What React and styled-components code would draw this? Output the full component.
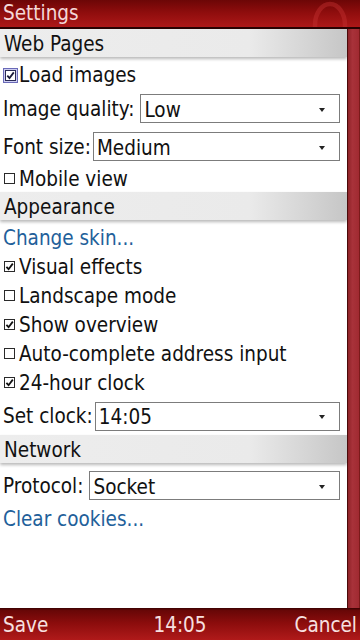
import { createGlobalStyle, styled } from 'styled-components'

const GlobalStyle = createGlobalStyle`
    html, body{
        margin: 0;
        padding: 0;
        background: #ffffff;
    }
    body{
        font-family: "DejaVu Sans Condensed", "DejaVu Sans", sans-serif;
        font-stretch: condensed;
    }
`

const Screen = styled.div`
    width: 360px;
    height: 640px;
    display: flex;
    flex-direction: column;
    overflow: hidden;
    font-size: 20.5px;
    color: #111111;
`

const TitleBar = styled.div`
    height: 27px;
    display: flex;
    justify-content: space-between;
    align-items: flex-start;
    background: linear-gradient(to bottom, #6c0606 0%, #8e0d0d 45%, #ad1818 100%);
    border-bottom: 2px solid #2a0202;
    padding-left: 3px;
    overflow: hidden;

    span{
        line-height: 26px;
        color: #f4d8d8;
    }
    svg{
        margin-right: 12px;
    }
`

const Body = styled.div`
    flex: 1;
    display: flex;
    min-height: 0;
`

const Content = styled.div`
    flex: 1;
    display: flex;
    flex-direction: column;
    background: #ffffff;
`

const Scrollbar = styled.div`
    width: 11px;
    border-left: 1px solid #4a0a0a;
    border-right: 1px solid #7a1a1a;
    background: linear-gradient(to right, #8f2328 0%, #a8323a 40%, #a02a31 100%);
`

const SectionHeader = styled.div`
    height: 28px;
    flex-shrink: 0;
    display: flex;
    align-items: center;
    padding: 2px 0 0 4px;
    box-sizing: border-box;
    margin-bottom: 3.5px;
    background: linear-gradient(to right, #ededed 0%, #eaeaea 72%, #c6c6c6 100%);
    box-shadow: 0 2px 3px rgba(0, 0, 0, 0.28);
`

const Row = styled.div`
    height: ${props => props.$h || 29}px;
    flex-shrink: 0;
    display: flex;
    align-items: center;
    padding-left: 3px;
    line-height: 20px;
    color: ${props => props.$link ? '#22609a' : '#111111'};
`

const CheckBox = styled.span`
    width: 15px;
    height: 20px;
    display: flex;
    align-items: center;
    margin-right: 1px;

    svg{
        display: block;
    }
`

const SelectRow = styled.div`
    height: 38px;
    flex-shrink: 0;
    display: flex;
    align-items: center;
    padding: 0 7px 0 3px;

    label{
        line-height: 20px;
        margin-right: ${props => props.$gap}px;
        white-space: nowrap;
    }
`

const SelectBox = styled.div`
    flex: 1;
    height: 29px;
    display: flex;
    align-items: center;
    justify-content: space-between;
    border: 1px solid #7c7c7c;
    box-sizing: border-box;
    padding: 2px 14px 0 3px;
    background: #ffffff;

    span{
        line-height: 20px;
    }
`

const Arrow = styled.i`
    width: 0;
    height: 0;
    border-left: 3px solid transparent;
    border-right: 3px solid transparent;
    border-top: 4px solid #222222;
`

const SoftBar = styled.div`
    height: 32px;
    display: grid;
    grid-template-columns: 1fr auto 1fr;
    align-items: center;
    padding: 0 3px;
    background: linear-gradient(to bottom, #3a0202 0%, #680707 8%, #8a0c0c 45%, #b01a1a 100%);
    color: #f7e0e0;

    span{
        line-height: 20px;
        padding-top: 2px;
    }
    span:last-child{
        justify-self: end;
    }
`

function Check({ checked, focused }){
    if(focused){
        return(
            <CheckBox>
                <svg width="15" height="15" viewBox="0 0 15 15">
                    <rect x="0.5" y="0.5" width="14" height="14" fill="#cdcdf0" stroke="#6a6ab8" />
                    <rect x="2.5" y="2.5" width="10" height="10" fill="#ffffff" stroke="#2a2a55" />
                    <path d="M4.3 7.6 L6.5 10 L10.8 4.4" fill="none" stroke="#1a1a3a" strokeWidth="1.8" />
                </svg>
            </CheckBox>
        )
    }
    return(
        <CheckBox>
            <svg width="13" height="13" viewBox="0 0 13 13">
                <rect x="1.5" y="1.5" width="10" height="10" fill="#ffffff" stroke="#2a2a2a" />
                {checked && <path d="M3.4 6.8 L5.6 9.2 L9.8 3.6" fill="none" stroke="#111111" strokeWidth="1.8" />}
            </svg>
        </CheckBox>
    )
}

function Select({ label, value, gap }){
    return(
        <SelectRow $gap={gap}>
            <label>{label}</label>
            <SelectBox>
                <span>{value}</span>
                <Arrow />
            </SelectBox>
        </SelectRow>
    )
}

function OperaMark(){
    return(
        <svg width="36" height="27" viewBox="0 0 36 27">
            <ellipse cx="18" cy="25" rx="15" ry="21" fill="none" stroke="#c43030" strokeWidth="4.5" opacity="0.45" />
        </svg>
    )
}

function App(){
    return(
        <Screen>
            <GlobalStyle />
            <TitleBar>
                <span>Settings</span>
                <OperaMark />
            </TitleBar>
            <Body>
                <Content>
                    <SectionHeader>Web Pages</SectionHeader>
                    <Row><Check checked focused />Load images</Row>
                    <Select label="Image quality:" value="Low" gap={6} />
                    <Select label="Font size:" value="Medium" gap={2} />
                    <Row $h={26}><Check />Mobile view</Row>

                    <SectionHeader>Appearance</SectionHeader>
                    <Row $link>Change skin...</Row>
                    <Row><Check checked />Visual effects</Row>
                    <Row><Check />Landscape mode</Row>
                    <Row><Check checked />Show overview</Row>
                    <Row><Check />Auto-complete address input</Row>
                    <Row><Check checked />24-hour clock</Row>
                    <Select label="Set clock:" value="14:05" gap={2} />

                    <SectionHeader>Network</SectionHeader>
                    <Select label="Protocol:" value="Socket" gap={6} />
                    <Row $link>Clear cookies...</Row>
                </Content>
                <Scrollbar />
            </Body>
            <SoftBar>
                <span>Save</span>
                <span>14:05</span>
                <span>Cancel</span>
            </SoftBar>
        </Screen>
    )
}

export default App
